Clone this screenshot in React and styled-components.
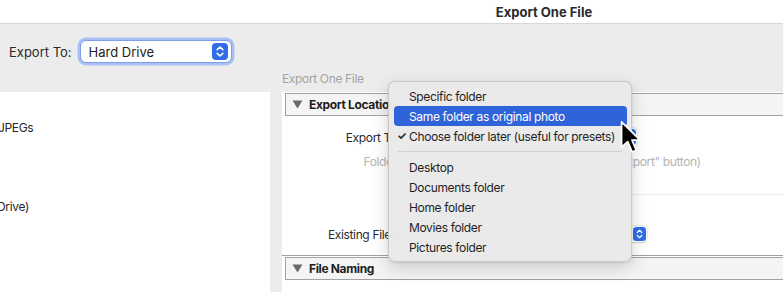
import React from 'react';
import styled, { createGlobalStyle } from 'styled-components';

const GlobalStyle = createGlobalStyle`
  html, body {
    margin: 0;
    padding: 0;
    background: #ececec;
    overflow: hidden;
  }
  body {
    font-family: Inter, "Noto Sans", "Liberation Sans", sans-serif;
    color: #262626;
    -webkit-font-smoothing: antialiased;
  }
`;

const Window = styled.div`
  position: relative;
  width: 783px;
  height: 292px;
  overflow: hidden;
  background: #ececec;
  display: flex;
  flex-direction: column;
`;

const TitleBar = styled.div`
  height: 23px;
  flex: none;
  background: #ffffff;
  border-bottom: 1px solid #d8d8d8;
  display: flex;
  align-items: center;
  justify-content: center;
  padding-left: 305px;
  font-size: 13px;
  font-weight: 700;
  color: #2b2b2b;
`;

const Toolbar = styled.div`
  flex: none;
  display: flex;
  align-items: center;
  gap: 8px;
  padding: 16px 0 0 9px;
`;

const ToolLabel = styled.span`
  font-size: 13px;
  color: #2a2a2a;
`;

const BigSelect = styled.div`
  width: 152px;
  height: 23px;
  box-sizing: border-box;
  background: #fff;
  border-radius: 6px;
  border: 1px solid #7f9ee8;
  box-shadow: 0 0 0 2.5px #a9c0f4;
  display: flex;
  align-items: center;
  justify-content: space-between;
  padding: 0 3px 0 8px;
  font-size: 13px;
  color: #222;
`;

const Content = styled.div`
  flex: 1;
  display: flex;
  gap: 12px;
  margin-top: 9px;
  min-height: 0;
  font-size: 12px;
  letter-spacing: -0.35px;
`;

const LeftPanel = styled.div`
  width: 270px;
  flex: none;
  margin-top: 20px;
  background: #fff;
  overflow: hidden;
  display: flex;
  flex-direction: column;
`;

const LeftItem = styled.div`
  margin-top: ${p => p.$top}px;
  margin-left: ${p => p.$shift}px;
  line-height: 14px;
  color: #262626;
  white-space: nowrap;
`;

const RightColumn = styled.div`
  flex: 1;
  display: flex;
  flex-direction: column;
  min-width: 0;
`;

const SubLabel = styled.div`
  height: 14px;
  line-height: 14px;
  color: #a3a3a3;
  margin-bottom: 6px;
`;

const RightPanel = styled.div`
  flex: 1;
  background: #fff;
  padding: 1px 0 0 3px;
  margin-right: -4px;
`;

const SectionHeader = styled.div`
  height: 23px;
  box-sizing: border-box;
  background: #f4f4f4;
  border: 1px solid #a2a2a2;
  border-right: none;
  display: flex;
  align-items: center;
  gap: 6px;
  padding-left: 6px;
  font-weight: 700;
  color: #1e1e1e;
  margin-top: ${p => p.$top || 0}px;
`;

const SectionBody = styled.div`
  padding: 10px 0 10px;
  border-bottom: 1px solid #a2a2a2;
  margin-left: -3px;
`;

const FormRow = styled.div`
  display: grid;
  grid-template-columns: 118px 1fr;
  column-gap: 6px;
  align-items: center;
  height: ${p => p.$h || 22}px;
  margin-top: ${p => p.$top || 0}px;
`;

const RowLabel = styled.span`
  text-align: right;
  color: ${p => (p.$dim ? '#b4b4b4' : '#2a2a2a')};
  white-space: nowrap;
`;

const RowValue = styled.span`
  color: #b4b4b4;
  white-space: nowrap;
`;

const RowRule = styled.div`
  grid-column: 2;
  align-self: end;
  height: 1px;
  background: #ececec;
`;

const PopUp = styled.div`
  width: ${p => p.$w}px;
  height: ${p => p.$h}px;
  box-sizing: border-box;
  background: #fff;
  border-radius: 4px;
  box-shadow: 0 0 0 0.5px rgba(0, 0, 0, 0.12), 0 0.5px 1.5px rgba(0, 0, 0, 0.15);
  display: flex;
  align-items: center;
  justify-content: flex-end;
  padding-right: 1px;
`;

const Menu = styled.div`
  position: absolute;
  left: 388px;
  top: 81px;
  width: 244px;
  box-sizing: border-box;
  padding: 4px 4px 4px 5px;
  background: rgba(234, 234, 234, 0.98);
  border: 1px solid rgba(0, 0, 0, 0.14);
  border-radius: 7px;
  box-shadow: 0 6px 18px rgba(0, 0, 0, 0.16), 0 1px 3px rgba(0, 0, 0, 0.1);
  font-size: 12px;
  letter-spacing: -0.35px;
`;

const MenuItem = styled.div`
  position: relative;
  height: 20px;
  display: flex;
  align-items: center;
  padding-left: 15px;
  border-radius: 4px;
  color: ${p => (p.$active ? '#ffffff' : '#1f1f1f')};
  background: ${p => (p.$active ? '#2f63d9' : 'transparent')};
  white-space: nowrap;
`;

const Check = styled.span`
  position: absolute;
  left: 3px;
  top: 3px;
  font-size: 11px;
  font-weight: 700;
  line-height: 14px;
`;

const Separator = styled.div`
  height: 11px;
  display: flex;
  align-items: center;
  padding: 0 5px 0 4px;
  &::after {
    content: '';
    flex: 1;
    height: 1px;
    background: #d2d2d2;
  }
`;

const Cursor = styled.svg`
  position: absolute;
  left: 620px;
  top: 120px;
`;

const Stepper = ({ size }) => (
  <svg width={size} height={size + 1} viewBox="0 0 16 17">
    <rect x="0" y="0" width="16" height="17" rx="4" fill="#2f6ee6" />
    <path d="M5.2 6.6 L8 4 L10.8 6.6" fill="none" stroke="#fff" strokeWidth="1.6" strokeLinecap="round" strokeLinejoin="round" />
    <path d="M5.2 10.4 L8 13 L10.8 10.4" fill="none" stroke="#fff" strokeWidth="1.6" strokeLinecap="round" strokeLinejoin="round" />
  </svg>
);

const Disclosure = () => (
  <svg width="11" height="9" viewBox="0 0 11 9">
    <path d="M0.5 0.5 L10.5 0.5 L5.5 8.5 Z" fill="#6b6b6b" />
  </svg>
);

const menuTop = ['Specific folder', 'Same folder as original photo', 'Choose folder later (useful for presets)'];
const menuBottom = ['Desktop', 'Documents folder', 'Home folder', 'Movies folder', 'Pictures folder'];

export default function App() {
  return (
    <Window>
      <GlobalStyle />
      <TitleBar>Export One File</TitleBar>
      <Toolbar>
        <ToolLabel>Export To:</ToolLabel>
        <BigSelect>
          <span>Hard Drive</span>
          <Stepper size={16} />
        </BigSelect>
      </Toolbar>
      <Content>
        <LeftPanel>
          <LeftItem $top={29} $shift={-2}>JPEGs</LeftItem>
          <LeftItem $top={65} $shift={-3}>Drive)</LeftItem>
        </LeftPanel>
        <RightColumn>
          <SubLabel>Export One File</SubLabel>
          <RightPanel>
            <SectionHeader>
              <Disclosure />
              <span>Export Location</span>
            </SectionHeader>
            <SectionBody>
              <FormRow>
                <RowLabel>Export To:</RowLabel>
                <PopUp $w={231} $h={18}>
                  <Stepper size={15} />
                </PopUp>
              </FormRow>
              <FormRow $top={2}>
                <RowLabel $dim>Folder:</RowLabel>
                <RowValue>(folder will be chosen after clicking the "Export" button)</RowValue>
              </FormRow>
              <FormRow $h={23}>
                <RowRule />
              </FormRow>
              <FormRow $top={28}>
                <RowLabel>Existing Files:</RowLabel>
                <PopUp $w={241} $h={16}>
                  <Stepper size={13} />
                </PopUp>
              </FormRow>
            </SectionBody>
            <SectionHeader $top={1}>
              <Disclosure />
              <span>File Naming</span>
            </SectionHeader>
          </RightPanel>
        </RightColumn>
      </Content>

      <Menu>
        {menuTop.map((label, i) => (
          <MenuItem key={label} $active={i === 1}>
            {i === 2 && <Check>✓</Check>}
            {label}
          </MenuItem>
        ))}
        <Separator />
        {menuBottom.map(label => (
          <MenuItem key={label}>{label}</MenuItem>
        ))}
      </Menu>

      <Cursor width="22" height="35" viewBox="0 0 14 22">
        <path
          d="M1 1 L1 17.2 L4.9 13.6 L7.7 20.2 L10.3 19.1 L7.6 12.6 L12.8 12.6 Z"
          fill="#000"
          stroke="#fff"
          strokeWidth="1.1"
          strokeLinejoin="round"
        />
      </Cursor>
    </Window>
  );
}
